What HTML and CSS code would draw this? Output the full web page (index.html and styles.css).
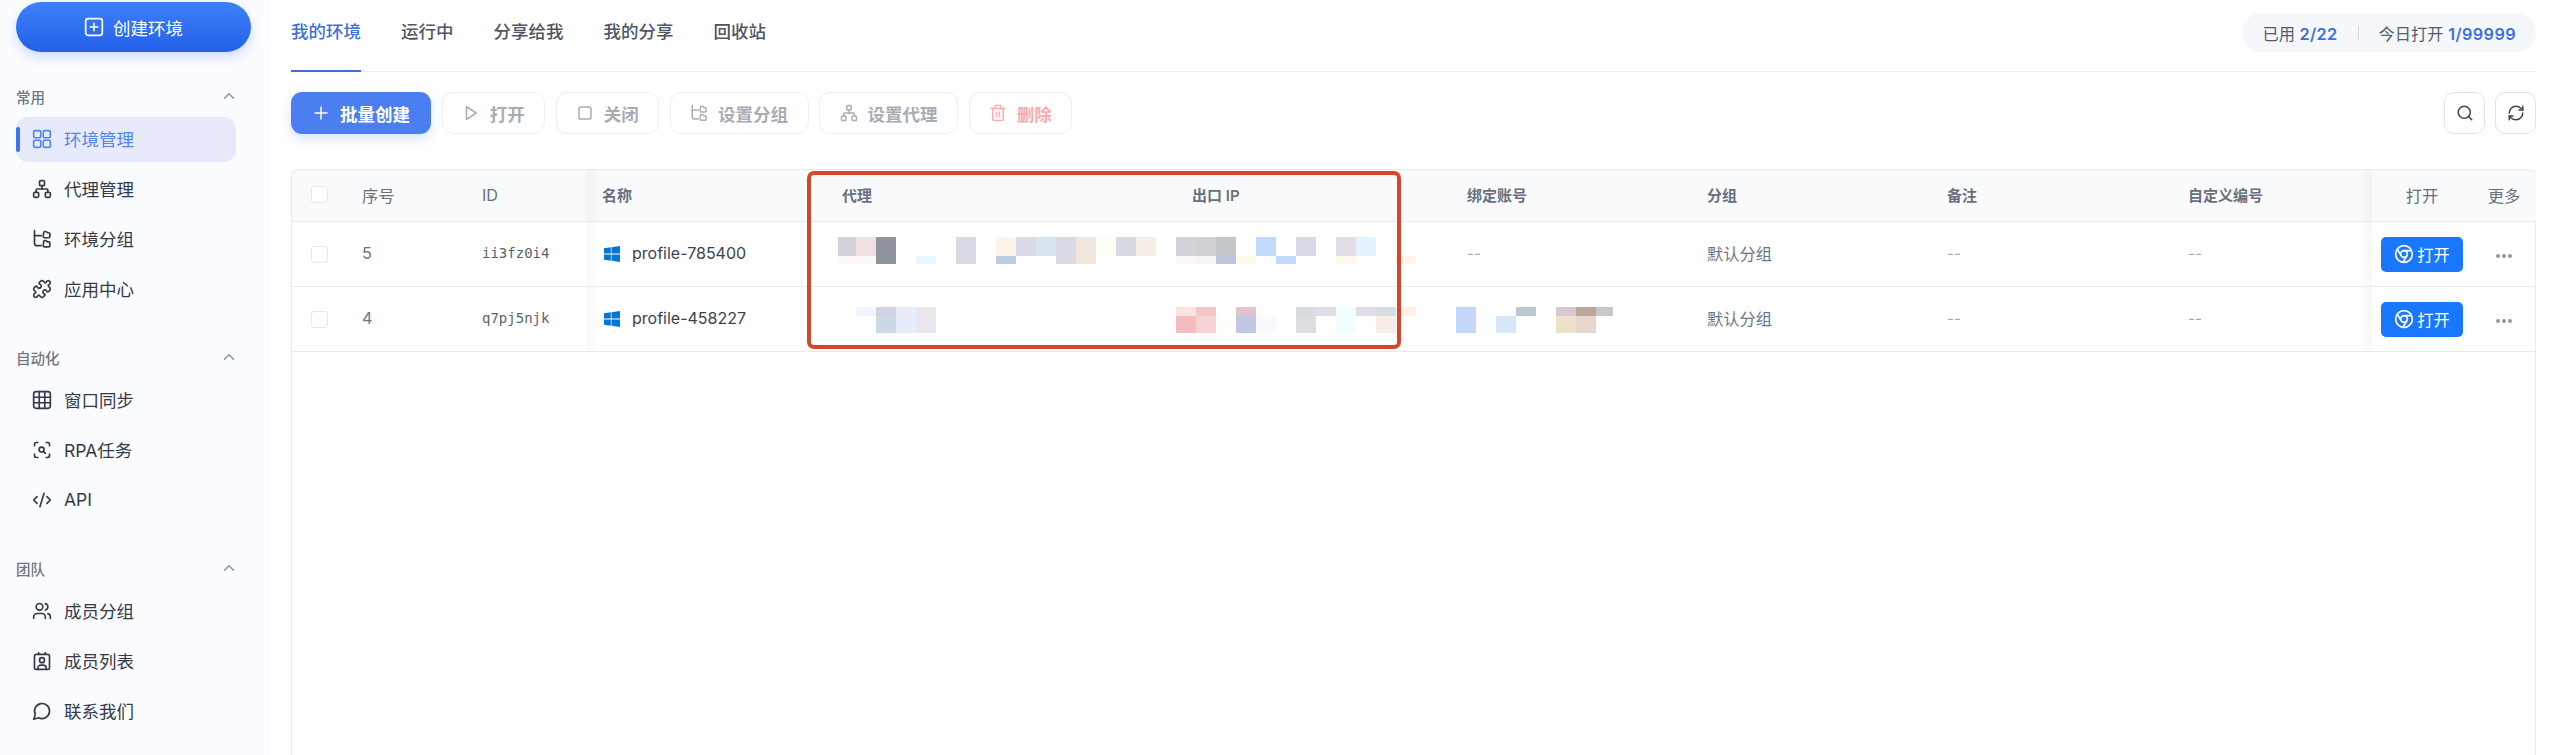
FILE: index.html
```html
<!DOCTYPE html>
<html lang="zh-CN">
<head>
  <meta charset="utf-8">
  <title>我的环境</title>
  <link rel="stylesheet" href="styles.css">
</head>
<body>
  <svg class="icon-defs" width="0" height="0">
    <symbol id="i-network" viewBox="0 0 24 24"><rect x="16" y="16" width="6" height="6" rx="1.5"/><rect x="2" y="16" width="6" height="6" rx="1.5"/><rect x="9" y="2" width="6" height="6" rx="1.5"/><path d="M5 16v-3a1 1 0 0 1 1-1h12a1 1 0 0 1 1 1v3"/><path d="M12 12V8"/></symbol>
    <symbol id="i-tree" viewBox="0 0 24 24"><path d="M3 2v15a3 3 0 0 0 3 3h5"/><path d="M3 8h8"/><path d="M14 4.5a1.5 1.5 0 0 1 1.5-1.5h1.500l1.500 1.500h1.500a1.500 1.500 0 0 1 1.500 1.500v3a1.500 1.500 0 0 1-1.500 1.500h-5a1.500 1.500 0 0 1-1.500-1.500z"/><path d="M14 15.500a1.500 1.500 0 0 1 1.500-1.500h1.500l1.500 1.500h1.500a1.500 1.500 0 0 1 1.500 1.500v3a1.500 1.500 0 0 1-1.500 1.500h-5a1.500 1.500 0 0 1-1.500-1.500z"/></symbol>
    <symbol id="i-chevron" viewBox="0 0 24 24"><path d="m18 15-6-6-6 6"/></symbol>
    <symbol id="i-chrome" viewBox="0 0 24 24"><circle cx="12" cy="12" r="10"/><circle cx="12" cy="12" r="4"/><path d="M21.170 8H12"/><path d="M3.950 6.060 8.540 14"/><path d="M10.880 21.940 15.460 14"/></symbol>
    <symbol id="i-windows" viewBox="0 0 16 16"><polygon points="0 2.300 6.800 1.300 6.800 7.600 0 7.600"/><polygon points="7.500 1.200 16 0 16 7.600 7.500 7.600"/><polygon points="0 8.400 6.800 8.400 6.800 14.700 0 13.700"/><polygon points="7.500 8.400 16 8.400 16 16 7.500 14.800"/></symbol>
  </svg>

  <aside class="sidebar">
    <button class="create-btn">
      <svg class="icon create-icon" viewBox="0 0 24 24"><rect x="2" y="2" width="20" height="20" rx="3"/><path d="M12 7.500v9M7.500 12h9"/></svg>
      创建环境
    </button>

    <div class="side-head first">常用<svg class="chevron"><use href="#i-chevron"/></svg></div>
    <ul class="side-list">
      <li class="side-item active">
        <svg class="icon" viewBox="0 0 24 24"><rect x="2" y="2" width="8.500" height="8.500" rx="1.500"/><rect x="13.500" y="2" width="8.500" height="8.500" rx="1.500"/><rect x="2" y="13.500" width="8.500" height="8.500" rx="1.500"/><rect x="13.500" y="13.500" width="8.500" height="8.500" rx="1.500"/></svg>
        环境管理
      </li>
      <li class="side-item"><svg class="icon"><use href="#i-network"/></svg>代理管理</li>
      <li class="side-item"><svg class="icon"><use href="#i-tree"/></svg>环境分组</li>
      <li class="side-item">
        <svg class="icon" viewBox="0 0 24 24"><path d="M19.439 7.850c-.049.322.059.648.289.878l1.568 1.568c.47.47.706 1.087.706 1.704s-.235 1.233-.706 1.704l-1.611 1.611a.98.98 0 0 1-.837.276c-.47-.07-.802-.48-.968-.925a2.501 2.501 0 1 0-3.214 3.214c.446.166.855.497.925.968a.979.979 0 0 1-.276.837l-1.61 1.61a2.404 2.404 0 0 1-1.705.707 2.402 2.402 0 0 1-1.704-.706l-1.568-1.568a1.026 1.026 0 0 0-.877-.29c-.493.074-.84.504-1.02.968a2.500 2.500 0 1 1-3.237-3.237c.464-.18.894-.527.967-1.020a1.026 1.026 0 0 0-.289-.877l-1.568-1.568A2.402 2.402 0 0 1 1.998 12c0-.617.236-1.234.706-1.704L4.230 8.770c.24-.24.581-.353.917-.303.515.077.877.528 1.073 1.010a2.500 2.500 0 1 0 3.259-3.259c-.482-.196-.933-.558-1.010-1.073-.05-.336.062-.676.303-.917l1.525-1.525A2.402 2.402 0 0 1 12 1.998c.617 0 1.234.236 1.704.706l1.568 1.568c.23.23.556.338.877.29.493-.074.84-.504 1.020-.968a2.500 2.500 0 1 1 3.237 3.237c-.464.18-.894.527-.967 1.020Z"/></svg>
        应用中心
      </li>
    </ul>

    <div class="side-head">自动化<svg class="chevron"><use href="#i-chevron"/></svg></div>
    <ul class="side-list">
      <li class="side-item">
        <svg class="icon" viewBox="0 0 24 24"><rect x="2" y="2" width="20" height="20" rx="3"/><path d="M2 8.700h20M2 15.300h20M8.700 2v20M15.300 2v20"/></svg>
        窗口同步
      </li>
      <li class="side-item">
        <svg class="icon" viewBox="0 0 24 24"><path d="M3 7V5a2 2 0 0 1 2-2h2M17 3h2a2 2 0 0 1 2 2v2M21 17v2a2 2 0 0 1-2 2h-2M7 21H5a2 2 0 0 1-2-2v-2"/><circle cx="11.500" cy="11.500" r="3"/><path d="m16 16-2.300-2.300"/></svg>
        RPA任务
      </li>
      <li class="side-item">
        <svg class="icon" viewBox="0 0 24 24"><path d="m18 16 4-4-4-4"/><path d="m6 8-4 4 4 4"/><path d="m14.500 4-5 16"/></svg>
        API
      </li>
    </ul>

    <div class="side-head">团队<svg class="chevron"><use href="#i-chevron"/></svg></div>
    <ul class="side-list">
      <li class="side-item">
        <svg class="icon" viewBox="0 0 24 24"><path d="M16 21v-2a4 4 0 0 0-4-4H6a4 4 0 0 0-4 4v2"/><circle cx="9" cy="7" r="4"/><path d="M22 21v-2a4 4 0 0 0-3-3.870"/><path d="M16 3.130a4 4 0 0 1 0 7.750"/></svg>
        成员分组
      </li>
      <li class="side-item">
        <svg class="icon" viewBox="0 0 24 24"><path d="M16 2v2M8 2v2"/><rect x="3" y="4" width="18" height="18" rx="2"/><circle cx="12" cy="11" r="3"/><path d="M7 22v-1.500a3.500 3.500 0 0 1 3.500-3.500h3a3.500 3.500 0 0 1 3.500 3.500V22"/></svg>
        成员列表
      </li>
      <li class="side-item">
        <svg class="icon" viewBox="0 0 24 24"><path d="M7.900 20A9 9 0 1 0 4 16.100L2 22Z"/></svg>
        联系我们
      </li>
    </ul>
  </aside>

  <main class="main">
    <div class="tabbar">
      <a class="tab active">我的环境</a>
      <a class="tab">运行中</a>
      <a class="tab">分享给我</a>
      <a class="tab">我的分享</a>
      <a class="tab">回收站</a>
      <div class="usage">
        <span class="usage-part">已用 <b>2/22</b></span>
        <i class="usage-line"></i>
        <span class="usage-part">今日打开 <b>1/99999</b></span>
      </div>
    </div>

    <div class="toolbar">
      <button class="btn btn-primary">
        <svg class="btn-icon" viewBox="0 0 24 24"><path d="M12 4v16M4 12h16"/></svg>批量创建
      </button>
      <button class="btn btn-off w-short">
        <svg class="btn-icon" viewBox="0 0 24 24"><path d="M6 3.500 19 12 6 20.500z"/></svg>打开
      </button>
      <button class="btn btn-off w-short">
        <svg class="btn-icon" viewBox="0 0 24 24"><rect x="4" y="4" width="16" height="16" rx="2.500"/></svg>关闭
      </button>
      <button class="btn btn-off w-long"><svg class="btn-icon"><use href="#i-tree"/></svg>设置分组</button>
      <button class="btn btn-off w-long"><svg class="btn-icon"><use href="#i-network"/></svg>设置代理</button>
      <button class="btn btn-off btn-danger w-short">
        <svg class="btn-icon" viewBox="0 0 24 24"><path d="M3 6h18"/><path d="M19 6v14a2 2 0 0 1-2 2H7a2 2 0 0 1-2-2V6"/><path d="M8 6V4a2 2 0 0 1 2-2h4a2 2 0 0 1 2 2v2"/><path d="M10 11v6M14 11v6"/></svg>删除
      </button>
      <div class="toolbar-right">
        <button class="square-btn">
          <svg class="square-icon" viewBox="0 0 24 24"><circle cx="11" cy="11" r="8"/><path d="m21 21-4.300-4.300"/></svg>
        </button>
        <button class="square-btn">
          <svg class="square-icon" viewBox="0 0 24 24"><path d="M3 12a9 9 0 0 1 9-9 9.750 9.750 0 0 1 6.740 2.740L21 8"/><path d="M21 3v5h-5"/><path d="M21 12a9 9 0 0 1-9 9 9.750 9.750 0 0 1-6.740-2.740L3 16"/><path d="M8 16H3v5"/></svg>
        </button>
      </div>
    </div>

    <div class="table-frame">
      <table class="env-table">
        <colgroup>
          <col class="c-check"><col class="c-no"><col class="c-id"><col class="c-name"><col class="c-proxy"><col class="c-ip">
          <col class="c-account"><col class="c-group"><col class="c-note"><col class="c-code"><col class="c-open"><col class="c-more">
        </colgroup>
        <thead>
          <tr>
            <th><span class="checkbox"></span></th>
            <th class="plain">序号</th>
            <th class="plain">ID</th>
            <th class="shade-right">名称</th>
            <th>代理</th>
            <th>出口 IP</th>
            <th>绑定账号</th>
            <th>分组</th>
            <th>备注</th>
            <th>自定义编号</th>
            <th class="plain center shade-left">打开</th>
            <th class="plain center">更多</th>
          </tr>
        </thead>
        <tbody>
          <tr>
            <td><span class="checkbox"></span></td>
            <td class="num">5</td>
            <td class="mono">ii3fz0i4</td>
            <td class="shade-right"><div class="profile"><svg class="win-icon"><use href="#i-windows"/></svg>profile-785400</div></td>
            <td></td>
            <td></td>
            <td class="empty">--</td>
            <td class="muted">默认分组</td>
            <td class="empty">--</td>
            <td class="empty">--</td>
            <td class="center shade-left"><button class="open-btn"><svg class="open-icon"><use href="#i-chrome"/></svg>打开</button></td>
            <td class="center"><span class="dots"><i></i><i></i><i></i></span></td>
          </tr>
          <tr>
            <td><span class="checkbox"></span></td>
            <td class="num">4</td>
            <td class="mono">q7pj5njk</td>
            <td class="shade-right"><div class="profile"><svg class="win-icon"><use href="#i-windows"/></svg>profile-458227</div></td>
            <td></td>
            <td></td>
            <td></td>
            <td class="muted">默认分组</td>
            <td class="empty">--</td>
            <td class="empty">--</td>
            <td class="center shade-left"><button class="open-btn"><svg class="open-icon"><use href="#i-chrome"/></svg>打开</button></td>
            <td class="center"><span class="dots"><i></i><i></i><i></i></span></td>
          </tr>
        </tbody>
      </table>

      <!-- pixelated values, laid over the table -->
      <svg class="mosaic" viewBox="838 237 780 96" width="780" height="96" shape-rendering="crispEdges">
        <rect x="838" y="237" width="18" height="19" fill="#d3d2d9"/><rect x="838" y="256" width="18" height="8" fill="#fff8f8"/>
        <rect x="856" y="237" width="20" height="19" fill="#f3e0e3"/><rect x="856" y="256" width="20" height="8" fill="#fff8f8"/>
        <rect x="876" y="237" width="20" height="27" fill="#8e939e"/>
        <rect x="916" y="256" width="20" height="8" fill="#e8f7fe"/>
        <rect x="956" y="237" width="20" height="27" fill="#d8dae6"/>
        <rect x="996" y="237" width="20" height="19" fill="#fff3ea"/><rect x="996" y="256" width="20" height="8" fill="#bccee5"/>
        <rect x="1016" y="237" width="20" height="19" fill="#d9dbe6"/>
        <rect x="1036" y="237" width="20" height="19" fill="#d6e5f0"/>
        <rect x="1056" y="237" width="20" height="19" fill="#d8dbe6"/><rect x="1056" y="256" width="20" height="8" fill="#dcdbe2"/>
        <rect x="1076" y="237" width="20" height="27" fill="#f1e7e1"/>
        <rect x="1096" y="237" width="20" height="19" fill="#fefef8"/>
        <rect x="1116" y="237" width="20" height="19" fill="#d7dae0"/>
        <rect x="1136" y="237" width="20" height="19" fill="#f6ede6"/>
        <rect x="1176" y="237" width="20" height="19" fill="#d3d2d9"/><rect x="1176" y="256" width="20" height="8" fill="#fdf7f8"/>
        <rect x="1196" y="237" width="20" height="19" fill="#d2d0d7"/><rect x="1196" y="256" width="20" height="8" fill="#f9f5f6"/>
        <rect x="1216" y="237" width="20" height="19" fill="#c2c7c9"/><rect x="1216" y="256" width="20" height="8" fill="#c1c6de"/>
        <rect x="1236" y="256" width="20" height="8" fill="#fff9ec"/>
        <rect x="1256" y="237" width="20" height="19" fill="#c4dafc"/>
        <rect x="1276" y="256" width="20" height="8" fill="#c4dafc"/>
        <rect x="1296" y="237" width="20" height="19" fill="#d7dae7"/>
        <rect x="1336" y="237" width="20" height="19" fill="#e1dce5"/><rect x="1336" y="256" width="20" height="8" fill="#fff9ec"/>
        <rect x="1356" y="237" width="20" height="19" fill="#e1f3fe"/>
        <rect x="1396" y="256" width="20" height="8" fill="#fff3ea"/>

        <rect x="856" y="307" width="20" height="9" fill="#eef6fe"/>
        <rect x="876" y="307" width="20" height="9" fill="#d2d1e2"/><rect x="876" y="316" width="20" height="17" fill="#cbd8e6"/>
        <rect x="896" y="307" width="20" height="26" fill="#e7eefa"/>
        <rect x="916" y="307" width="20" height="26" fill="#ebe6ee"/>
        <rect x="1176" y="307" width="20" height="9" fill="#fbe3e4"/><rect x="1176" y="316" width="20" height="17" fill="#f5bcc0"/>
        <rect x="1196" y="307" width="20" height="9" fill="#f3c7ca"/><rect x="1196" y="316" width="20" height="17" fill="#f6d3d4"/>
        <rect x="1216" y="316" width="20" height="17" fill="#fffffa"/>
        <rect x="1236" y="307" width="20" height="9" fill="#e3c4cc"/><rect x="1236" y="316" width="20" height="17" fill="#c4c7e3"/>
        <rect x="1256" y="316" width="20" height="17" fill="#f8faff"/>
        <rect x="1296" y="307" width="20" height="9" fill="#d8dbe0"/><rect x="1296" y="316" width="20" height="17" fill="#dcdce2"/>
        <rect x="1316" y="307" width="20" height="9" fill="#e1dce5"/>
        <rect x="1336" y="307" width="20" height="26" fill="#f0ffff"/>
        <rect x="1356" y="307" width="20" height="9" fill="#e1dce5"/>
        <rect x="1376" y="307" width="20" height="9" fill="#d8dde1"/><rect x="1376" y="316" width="20" height="17" fill="#f6ece5"/>
        <rect x="1396" y="307" width="20" height="9" fill="#fff1ea"/>
        <rect x="1456" y="307" width="20" height="26" fill="#c4d8fb"/>
        <rect x="1496" y="316" width="20" height="17" fill="#d7e6f9"/>
        <rect x="1516" y="307" width="20" height="9" fill="#bbc8cd"/>
        <rect x="1556" y="307" width="20" height="9" fill="#d9c8ce"/><rect x="1556" y="316" width="20" height="17" fill="#efe0ca"/>
        <rect x="1576" y="307" width="20" height="9" fill="#b9a89a"/><rect x="1576" y="316" width="20" height="17" fill="#e8d7cd"/>
        <rect x="1596" y="307" width="17" height="9" fill="#c7c9cc"/>
      </svg>

      <div class="mark-box"></div>
    </div>
  </main>
</body>
</html>
```

FILE: styles.css
```css
* {
  box-sizing: border-box;
}

html, body {
  height: 100%;
}

body {
  margin: 0;
  display: flex;
  overflow: hidden;
  background: #fff;
  color: #3a4150;
  font-family: Inter, "Noto Sans CJK SC", "Noto Sans", sans-serif;
  font-size: 16.25px;
}

button {
  font-family: inherit;
  cursor: pointer;
}

ul {
  list-style: none;
  margin: 0;
  padding: 0;
}

.icon-defs {
  position: absolute;
}

/* sidebar */
.sidebar {
  width: 271px;
  flex: none;
  padding: 2px 0 0 16px;
  background: #fbfcff;
}

.create-btn {
  width: 235px;
  height: 50px;
  display: flex;
  align-items: center;
  justify-content: center;
  gap: 9px;
  border: 0;
  border-radius: 25px;
  background: linear-gradient(180deg, #3d80fb, #2360e8);
  box-shadow: 0 5px 12px rgba(45, 105, 235, 0.22);
  color: #fff;
  font-size: 17.5px;
}

.create-icon {
  stroke: #fff;
}

.icon {
  width: 20px;
  height: 20px;
  flex: none;
  fill: none;
  stroke: currentColor;
  stroke-width: 2;
  stroke-linecap: round;
  stroke-linejoin: round;
}

.side-head {
  width: 222px;
  height: 22px;
  margin-top: 35px;
  padding-bottom: 2px;
  display: flex;
  align-items: center;
  justify-content: space-between;
  color: #6f7785;
  font-size: 14.5px;
  font-weight: 500;
}

.side-head.first {
  margin-top: 34px;
}

.chevron {
  width: 18px;
  height: 18px;
  fill: none;
  stroke: #8b93a1;
  stroke-width: 2;
  stroke-linecap: round;
  stroke-linejoin: round;
}

.side-list {
  width: 220px;
  margin-top: 9px;
  display: flex;
  flex-direction: column;
  gap: 5px;
}

.side-item {
  position: relative;
  height: 45px;
  display: flex;
  align-items: center;
  gap: 12.5px;
  padding: 0 0 2px 15.5px;
  border-radius: 12px;
  background: #fafbfe;
  color: #333a4a;
  font-size: 17.5px;
}

.side-item.active {
  background: #e6eafa;
  color: #5585e8;
}

.side-item.active::before {
  content: "";
  position: absolute;
  left: 0;
  top: 10px;
  width: 4px;
  height: 25px;
  border-radius: 2px;
  background: #3d73ec;
}

/* top tabs */
.main {
  flex: 1;
  min-width: 0;
  display: flex;
  flex-direction: column;
  padding: 0 20px;
}

.tabbar {
  height: 72px;
  flex: none;
  display: flex;
  gap: 40px;
  border-bottom: 1px solid #eceef3;
}

.tab {
  height: 72px;
  padding-top: 19px;
  line-height: 26px;
  border-bottom: 2px solid transparent;
  color: #4f5563;
  font-size: 17.5px;
  font-weight: 500;
}

.tab.active {
  border-bottom-color: #3f6fdc;
  color: #3f6fdc;
}

.usage {
  height: 39px;
  margin: 13px 0 0 auto;
  display: flex;
  align-items: center;
  gap: 20px;
  padding: 0 20px;
  border-radius: 20px;
  background: #f6f7fb;
  color: #555c6b;
  font-size: 16.25px;
}

.usage b {
  color: #3f6fdc;
  font-weight: 600;
  letter-spacing: 0.4px;
}

.usage-line {
  width: 1px;
  height: 15px;
  background: #d9dce3;
}

/* toolbar */
.toolbar {
  height: 42px;
  flex: none;
  margin: 20px 0 35px;
  display: flex;
  gap: 10.5px;
}

.btn {
  height: 42px;
  display: flex;
  align-items: center;
  justify-content: center;
  gap: 10px;
  border-radius: 11px;
  font-size: 17.5px;
  font-weight: 600;
}

.btn-icon {
  width: 18px;
  height: 18px;
  flex: none;
  fill: none;
  stroke: currentColor;
  stroke-width: 2;
  stroke-linecap: round;
  stroke-linejoin: round;
}

.btn-primary {
  width: 140px;
  border: 0;
  background: #4b7ef0;
  box-shadow: 0 5px 12px rgba(75, 126, 240, 0.22);
  color: #fff;
}

.btn-off {
  border: 1px solid #eeeff4;
  background: #fff;
  color: #a8acb6;
}

.btn-danger {
  color: #fbabab;
}

.w-short {
  width: 103.500px;
}

.w-long {
  width: 139px;
}

.toolbar-right {
  margin-left: auto;
  display: flex;
  gap: 10px;
}

.square-btn {
  width: 41px;
  height: 42px;
  display: flex;
  align-items: center;
  justify-content: center;
  padding: 0;
  border: 1px solid #dfe2ea;
  border-radius: 10px;
  background: #fff;
}

.square-icon {
  width: 18px;
  height: 18px;
  fill: none;
  stroke: #3d4454;
  stroke-width: 2;
  stroke-linecap: round;
  stroke-linejoin: round;
}

/* table */
.table-frame {
  position: relative;
  flex: 1;
  min-height: 0;
  border: 1px solid #e8eaf0;
  border-bottom: 0;
  border-radius: 8px 8px 0 0;
}

.env-table {
  width: 100%;
  table-layout: fixed;
  border-collapse: separate;
  border-spacing: 0;
}

.c-check { width: 54px; }
.c-no { width: 120px; }
.c-id { width: 120px; }
.c-name { width: 240px; }
.c-proxy { width: 350px; }
.c-ip { width: 275px; }
.c-account { width: 240px; }
.c-group { width: 240px; }
.c-note { width: 241px; }
.c-code { width: 200px; }
.c-open { width: 100px; }
.c-more { width: 64px; }

.env-table th,
.env-table td {
  position: relative;
  padding: 0 0 0 16px;
  border-bottom: 1px solid #e8eaf0;
  text-align: left;
  white-space: nowrap;
}

.env-table th {
  height: 52px;
  padding-bottom: 2px;
  background: #f9fafc;
  color: #687080;
  font-size: 15px;
  font-weight: 600;
}

.env-table th:first-child {
  border-radius: 8px 0 0 0;
}

.env-table th:last-child {
  border-radius: 0 8px 0 0;
}

.env-table td {
  height: 65px;
}

.env-table th.plain {
  font-size: 16.25px;
  font-weight: 400;
}

.env-table .center {
  padding-left: 0;
  text-align: center;
}

.env-table .num,
.env-table .mono,
.env-table .muted,
.env-table .empty {
  padding-bottom: 2px;
}

.checkbox {
  display: block;
  width: 17px;
  height: 17px;
  margin-left: 3px;
  border: 1px solid #e6e8ed;
  border-radius: 3px;
  background: #fff;
}

.shade-right::before,
.shade-left::before {
  content: "";
  position: absolute;
  top: 0;
  bottom: 0;
  width: 14px;
}

.shade-right::before {
  left: 0;
  background: linear-gradient(90deg, rgba(60, 65, 80, 0.035), rgba(60, 65, 80, 0));
}

.shade-left::before {
  left: -14px;
  background: linear-gradient(270deg, rgba(60, 65, 80, 0.035), rgba(60, 65, 80, 0));
}

.num {
  color: #6d7687;
}

.mono {
  color: #5a6271;
  font-family: "DejaVu Sans Mono", monospace;
  font-size: 14px;
}

.profile {
  display: flex;
  align-items: center;
  gap: 12px;
  padding: 0 0 2px 2px;
  color: #3a4150;
  font-size: 16px;
}

.win-icon {
  width: 16px;
  height: 16px;
  flex: none;
  margin-top: 2px;
  fill: #0078d4;
}

.muted {
  color: #6d7687;
}

.empty {
  color: #a3a8b2;
  font-size: 15px;
}

.open-btn {
  width: 82px;
  height: 35px;
  display: inline-flex;
  align-items: center;
  justify-content: center;
  gap: 3px;
  padding: 0;
  border: 0;
  border-radius: 5px;
  background: #1a77ff;
  color: #fff;
  font-size: 16.25px;
  vertical-align: middle;
}

.open-icon {
  width: 20px;
  height: 20px;
  fill: none;
  stroke: #fff;
  stroke-width: 2;
}

.dots {
  display: inline-flex;
  gap: 2px;
  vertical-align: middle;
}

.dots i {
  width: 4px;
  height: 4px;
  border-radius: 50%;
  background: #9096a4;
}

/* overlays, coordinates are relative to the table frame */
.mosaic {
  position: absolute;
  left: 546px;
  top: 67px;
}

.mark-box {
  position: absolute;
  left: 515px;
  top: 1px;
  width: 594px;
  height: 178px;
  border: 4px solid #d8462a;
  border-radius: 7px;
}
```
